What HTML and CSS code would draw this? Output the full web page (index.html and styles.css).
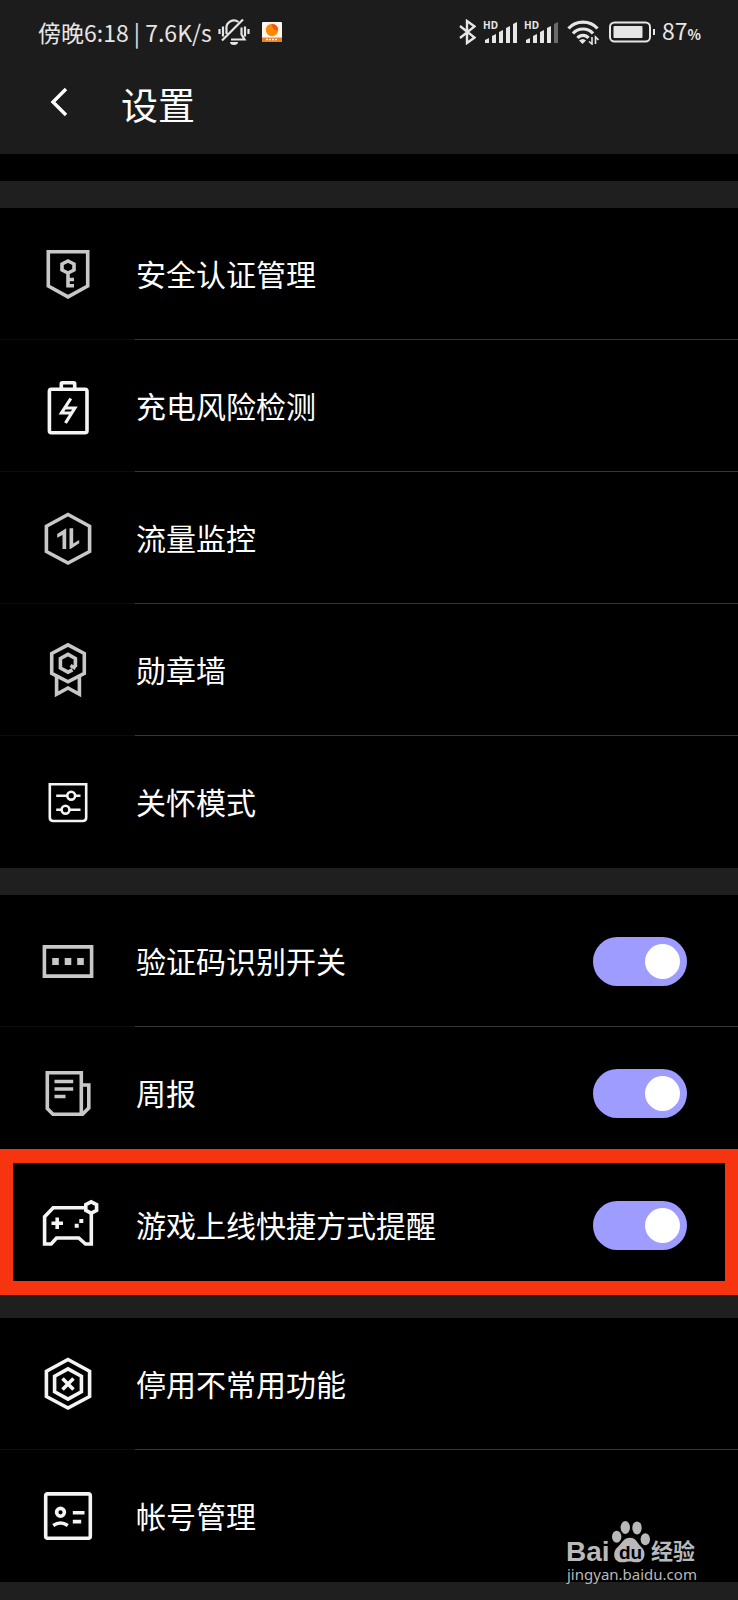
FILE: index.html
```
<!DOCTYPE html>
<html lang="zh-CN">
<head>
  <meta charset="UTF-8" />
  <meta name="viewport" content="width=device-width, initial-scale=1.0"/>
  <title>设置</title>
  <link rel="stylesheet" href="styles.css">
</head>
<body>
  <div class="header">
    <div class="status">
      <span class="status-text">傍晚6:18 | 7.6K/s</span>
      <svg class="bell" width="32" height="28" viewBox="0 0 32 28" fill="none" stroke="#e6e6e6" stroke-width="2.200">
        <path d="M1.500 11v5M5 8.500v10M27 8.500v10M30.500 11v5M8.500 16V11a7.500 7.500 0 0 1 12-7M4 22.500 25 1.500M23.500 9.500v7l3 5H13"/>
        <path d="M12 24h8a4 3 0 0 1-8 0z" fill="#e6e6e6" stroke="none"/>
      </svg>
      <svg class="app" width="20" height="20" viewBox="0 0 20 20">
        <rect width="20" height="20" rx="1" fill="#fff6ee"/>
        <path d="M0 15.500h20V19a1 1 0 0 1-1 1H1a1 1 0 0 1-1-1z" fill="#e8822a"/>
        <circle cx="10" cy="8" r="6.200" fill="#ff8a00"/>
        <path d="M10 2a6 6 0 0 1 6 6c-3 1-6-1-6-6z" fill="#f4511e"/>
        <path d="M4 17.500h12" stroke="#fff" stroke-width="1.500" stroke-dasharray="2 1"/>
      </svg>
      <div class="status-right">
        <svg width="17" height="26" viewBox="0 0 17 26" fill="none" stroke="#e6e6e6" stroke-width="2.400">
          <path d="M1 7 15.500 18.500 8 24V2L15.500 7.500 1 19"/>
        </svg>
        <svg width="34" height="26" viewBox="0 0 34 26" fill="#e6e6e6">
          <text class="hd" x="0" y="10">HD</text>
          <path d="M2 24v-3l4-2v5zM9 24v-7l4-2v9zM16 24V13l4-2v13zM23 24V9l4-2v17zM30 24V5l4-2v21z"/>
        </svg>
        <svg width="34" height="26" viewBox="0 0 34 26" fill="#e6e6e6">
          <text class="hd" x="0" y="10">HD</text>
          <path d="M2 24v-3l4-2v5zM9 24v-7l4-2v9zM16 24V13l4-2v13zM23 24V9l4-2v17z"/>
          <path d="M30 24V5l4-2v21z" fill="#6b6b6b"/>
        </svg>
        <svg class="wifi" width="32" height="26" viewBox="0 0 32 26" fill="none" stroke="#e6e6e6" stroke-width="3.200">
          <path d="M1.500 9.500C9 1 23 1 30.500 9.500M6 14.500c5-6 15-6 20 0M10.500 19c3-3.500 8-3.500 11 0"/>
          <path d="M12 21.500q4-3 7 0L15.500 25z" fill="#e6e6e6" stroke="none"/>
          <path d="M25 18v7l-3-2.500M28.500 25v-7l3 3" stroke-width="1.600"/>
        </svg>
        <svg class="battery" width="46" height="22" viewBox="0 0 46 22">
          <rect x="1" y="1.500" width="40" height="19" rx="4.500" fill="none" stroke="#e6e6e6" stroke-width="2"/>
          <rect x="4.500" y="5" width="29" height="12" rx="1" fill="#e6e6e6"/>
          <path d="M45 8v6" stroke="#e6e6e6" stroke-width="2"/>
        </svg>
        <span class="percent">87<small>%</small></span>
      </div>
    </div>
    <div class="title-bar">
      <button class="back" type="button" aria-label="返回">
        <svg width="18" height="30" viewBox="0 0 18 30" fill="none" stroke="#fff" stroke-width="3.400">
          <path d="M16 2 3 15 16 28"/>
        </svg>
      </button>
      <h1>设置</h1>
    </div>
  </div>

  <div class="content">
    <div class="group">
      <a class="row" href="#">
        <svg class="icon gray" viewBox="0 0 64 64">
          <path d="M12.300 9.800H51.700V44L32 54.900 12.300 44z"/>
          <path d="M32 19 38 22V28L32 31 26 28V22zM32 30V45.500M32 37.500H38M32 43.800H38"/>
        </svg>
        <span>安全认证管理</span>
      </a>
      <a class="row" href="#">
        <svg class="icon" viewBox="0 0 64 64">
          <rect x="13.400" y="15.200" width="37.600" height="43.600" rx="2"/>
          <path d="M25.300 15V9.700Q25.300 8.800 26.200 8.800H37.800Q38.700 8.800 38.700 9.700V15"/>
          <path class="bolt" d="M34.800 24.500 25.500 39H36.500M29.500 49 38.800 34H28"/>
        </svg>
        <span>充电风险检测</span>
      </a>
      <a class="row" href="#">
        <svg class="icon gray" viewBox="0 0 64 64">
          <path d="M32 8.500 53.600 20.200V45.500L32 57 10.400 45.500V20.200z"/>
          <path class="solid" d="M30.200 22.300V43H26.500V29L21.200 31.700V28zM33.500 22.300H37.200V37.500L43.200 34V37.300L34.500 43H33.500z"/>
        </svg>
        <span>流量监控</span>
      </a>
      <a class="row" href="#">
        <svg class="icon gray" viewBox="0 0 64 64">
          <path d="M32 6.800 48.300 15.500V35.300L32 43.800 15.700 35.300V15.500z"/>
          <path d="M39.400 29V20.500L32 16.400 24.400 20.500V30L32 34.200 36.500 31.800M34.500 27.500 39.500 30.500"/>
          <path d="M20.600 38V56.300L32 50 43.400 56.300V38"/>
        </svg>
        <span>勋章墙</span>
      </a>
      <a class="row" href="#">
        <svg class="icon thin" viewBox="0 0 64 64">
          <path d="M13.800 14.300H50.200V47.500Q50.200 51 46.700 51H17.300Q13.800 51 13.800 47.500z"/>
          <circle cx="35.200" cy="25.700" r="3.900"/>
          <circle cx="29.500" cy="39.700" r="3.900"/>
          <path d="M20.200 25.700H31M39.500 25.700H44.500M20.200 39.700H25.500M33.500 39.700H44.500"/>
        </svg>
        <span>关怀模式</span>
      </a>
    </div>

    <div class="group">
      <label class="row">
        <svg class="icon gray" viewBox="0 0 64 64">
          <path d="M8.400 17.900H55.600V47.100H8.400z"/>
          <path class="solid" d="M16.200 29H22.800V36H16.200zM28.700 29H35.300V36H28.700zM41.200 29H47.800V36H41.200z"/>
        </svg>
        <span>验证码识别开关</span>
        <input class="switch" type="checkbox" checked>
      </label>
      <label class="row">
        <svg class="icon gray" viewBox="0 0 64 64">
          <path d="M45.300 53.200H17L11.300 47.500V11.800H45.300V53.200H46.500L52.800 47V24H45.300"/>
          <path d="M18.500 20.500H37.200M18.500 28H37.200M18.500 35.500H29.500"/>
        </svg>
        <span>周报</span>
        <input class="switch" type="checkbox" checked>
      </label>
      <label class="row highlight">
        <svg class="icon" viewBox="0 0 64 64">
          <path d="M48 14.800H17.200L8.600 23.700V51H15.200L20.500 45H42.800L49.500 51H55.300V21"/>
          <path d="M55.200 8.800 60.600 11.700V17.300L55.200 20.200 49.800 17.300V11.700z"/>
          <path d="M15.500 30.300H27M21.200 24.500V36"/>
          <path class="solid" d="M43.300 26H47.300V30H43.300zM38.700 30.700H42.700V34.700H38.700z"/>
        </svg>
        <span>游戏上线快捷方式提醒</span>
        <input class="switch" type="checkbox" checked>
      </label>
    </div>

    <div class="group">
      <a class="row" href="#">
        <svg class="icon" viewBox="0 0 64 64">
          <path d="M32 7.500 53.600 19.200V44.500L32 56 10.400 44.500V19.200z"/>
          <path d="M32 16.800 45.400 24.200V39.800L32 47.200 18.600 39.800V24.200z"/>
          <path d="M26.500 26.500 37.500 37.500M37.500 26.500 26.500 37.500"/>
        </svg>
        <span>停用不常用功能</span>
      </a>
      <a class="row" href="#">
        <svg class="icon" viewBox="0 0 64 64">
          <rect x="9.700" y="9.900" width="44.600" height="44.300" rx="2"/>
          <circle cx="24.500" cy="28.300" r="3.900"/>
          <path d="M17.200 41.500Q24.500 36.500 31.800 41.500M36.800 28.700H48.500M36.800 37.600H45.200"/>
        </svg>
        <span>帐号管理</span>
      </a>
    </div>
  </div>

  <svg class="watermark" width="136" height="68" viewBox="0 0 136 68" fill="#b9b9b9">
    <text class="wm-bai" x="0" y="41">Bai</text>
    <ellipse cx="50.700" cy="16.700" rx="4.700" ry="6"/>
    <ellipse cx="59.300" cy="7.500" rx="4.700" ry="6.500"/>
    <ellipse cx="71" cy="7.900" rx="4.700" ry="6.500"/>
    <ellipse cx="79.300" cy="19.200" rx="4.700" ry="6"/>
    <path d="M64 17.700c6 0 7 5 11 9 6 5 4 15.600-4 15.600-3 0-5-.8-7.500-.8s-4.500.8-7.500.8c-9 0-10-10.600-4-15.600 4-4 6-9 12-9z"/>
    <text class="wm-du" x="53" y="39">du</text>
    <text class="wm-name" x="85" y="39">经验</text>
    <text class="wm-url" x="1" y="60">jingyan.baidu.com</text>
  </svg>
</body>
</html>
```
FILE: styles.css
```
body {
  font-family: "Noto Sans CJK SC", "Noto Sans", sans-serif;
  color: #fff;
  background-color: #1f1f1f;
  margin: 0;
  min-height: 100vh;
  position: relative;
}
.header {
  background-color: #1c1c1c;
}
.status {
  display: flex;
  align-items: center;
  height: 64px;
  padding: 0 37px 0 38px;
  color: #e6e6e6;
  font-size: 23px;
  line-height: 32px;
}
.status-text {
  white-space: nowrap;
}
.bell {
  margin-left: 6px;
}
.app {
  margin-left: 12px;
}
.status-right {
  display: flex;
  align-items: center;
  gap: 7px;
  margin-left: auto;
}
.hd {
  font: bold 10px "Noto Sans", sans-serif;
}
.wifi {
  margin-left: 2px;
}
.battery {
  margin-left: 3px;
}
.percent small {
  font-size: 14px;
  font-weight: bold;
}
.title-bar {
  display: flex;
  align-items: center;
  height: 90px;
}
.back {
  display: flex;
  align-items: center;
  justify-content: center;
  width: 118px;
  height: 64px;
  padding: 0;
  border: 0;
  background: none;
  margin: 0 3px 14px 0;
}
h1 {
  margin: 0 0 10px;
  font-size: 37px;
  font-weight: normal;
  line-height: 48px;
}
.content {
  display: flex;
  flex-direction: column;
  gap: 27px;
  border-top: 27px solid #000;
  padding-top: 27px;
}
.group {
  background-color: #000;
}
.row {
  display: flex;
  align-items: center;
  position: relative;
  height: 132px;
  box-sizing: border-box;
  padding-right: 51px;
  color: #fff;
  font-size: 30px;
  line-height: 44px;
  text-decoration: none;
  background: linear-gradient(to right, #0d0d0d 135px, #383838 135px) bottom / 100% 1px no-repeat;
}
.row:last-child {
  background: none;
}
.row span {
  flex: 1;
  padding-bottom: 2px;
}
.icon {
  width: 64px;
  height: 64px;
  margin: 0 36px;
  fill: none;
  stroke: #f4f4f4;
  stroke-width: 3.6;
}
.icon.gray {
  stroke: #c8c8c8;
}
.icon.thin {
  stroke-width: 2.6;
}
.icon .bolt {
  stroke-width: 3.2;
}
.icon .solid {
  fill: #f4f4f4;
  stroke: none;
}
.icon.gray .solid {
  fill: #c8c8c8;
}
.switch {
  appearance: none;
  width: 94px;
  height: 49px;
  margin: 0;
  padding: 7px;
  box-sizing: border-box;
  border-radius: 25px;
  background-color: #555;
  display: flex;
  align-items: center;
}
.switch::before {
  content: "";
  width: 35px;
  height: 35px;
  border-radius: 50%;
  background-color: #fff;
}
.switch:checked {
  background-color: #9e9cff;
  justify-content: flex-end;
}
/* red frame round the row */
.highlight::after {
  content: "";
  position: absolute;
  inset: -10px 0 -4px;
  border: 14px solid #f63410;
  border-width: 14px 13px;
  pointer-events: none;
}
.watermark {
  position: absolute;
  right: 36px;
  bottom: 12px;
}
.wm-bai {
  font: bold 28px "Liberation Sans", sans-serif;
}
.wm-du {
  font: bold 19px "Liberation Sans", sans-serif;
  fill: #000;
}
.wm-name {
  font: bold 22px "Noto Sans CJK SC", sans-serif;
}
.wm-url {
  font: 15px "Noto Sans", sans-serif;
}
```
